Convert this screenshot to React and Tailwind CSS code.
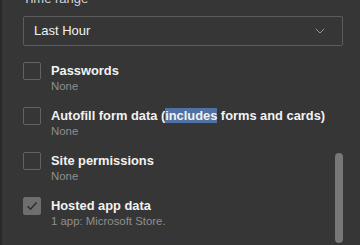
import { ChevronDown } from 'lucide-react';

const items = [
  { id: 'passwords', title: 'Passwords', sub: 'None', checked: false },
  { id: 'autofill', title: 'Autofill form data', sub: 'None', checked: false, extra: true },
  { id: 'site', title: 'Site permissions', sub: 'None', checked: false },
  { id: 'hosted', title: 'Hosted app data', sub: '1 app: Microsoft Store.', checked: true },
];

const Checkbox = ({ checked }) => (
  <div
    className={`w-[18px] h-[18px] shrink-0 rounded-[2px] border flex items-center justify-center ${
      checked ? 'bg-[#6e6e6e] border-[#6e6e6e]' : 'border-[#626262]'
    }`}
  >
    {checked && (
      <svg width="12" height="10" viewBox="0 0 12 10" fill="none">
        <path d="M1.5 5.2 L4.5 8.2 L10.5 1.5" stroke="#2e2e2e" strokeWidth="1.6" />
      </svg>
    )}
  </div>
);

export default function App() {
  return (
    <div
      className="w-[360px] h-[245px] bg-[#363636] overflow-hidden relative flex"
      style={{ fontFamily: '"Liberation Sans", Arial, sans-serif' }}
    >
      <div className="w-[2px] h-full bg-[#292929] shrink-0" />
      <div className="flex-1 pl-[21px] flex flex-col">
        <div className="mt-[-9px] text-[13px] leading-[16px] text-[#d4d4d4]">Time range</div>
        <div className="mt-[9px] w-[320px] h-[30px] border border-[#5c5c5c] rounded-[2px] flex items-center justify-between pl-[10px] pr-[14px]">
          <span className="text-[13px] text-[#f2f2f2]">Last Hour</span>
          <ChevronDown size={16} strokeWidth={1.4} className="text-[#a0a0a0]" />
        </div>
        <div className="mt-[16px] flex flex-col">
          {items.map(item => (
            <div key={item.id} className="h-[45px] flex items-start gap-[10px]">
              <Checkbox checked={item.checked} />
              <div className="mt-[1px] flex flex-col">
                <span className="text-[12.85px] leading-[16px] font-bold text-[#f2f2f2] whitespace-nowrap">
                  {item.title}
                  {item.extra && (
                    <>
                      {' ('}
                      <span className="bg-[#4f71a3]">includes</span>
                      {' forms and cards)'}
                    </>
                  )}
                </span>
                <span className="text-[11.4px] leading-[14px] text-[#8f8f8f]">{item.sub}</span>
              </div>
            </div>
          ))}
        </div>
      </div>
      <div className="absolute left-[335px] top-[153px] w-[8px] h-[90px] rounded-full bg-[#777777]" />
    </div>
  );
}
